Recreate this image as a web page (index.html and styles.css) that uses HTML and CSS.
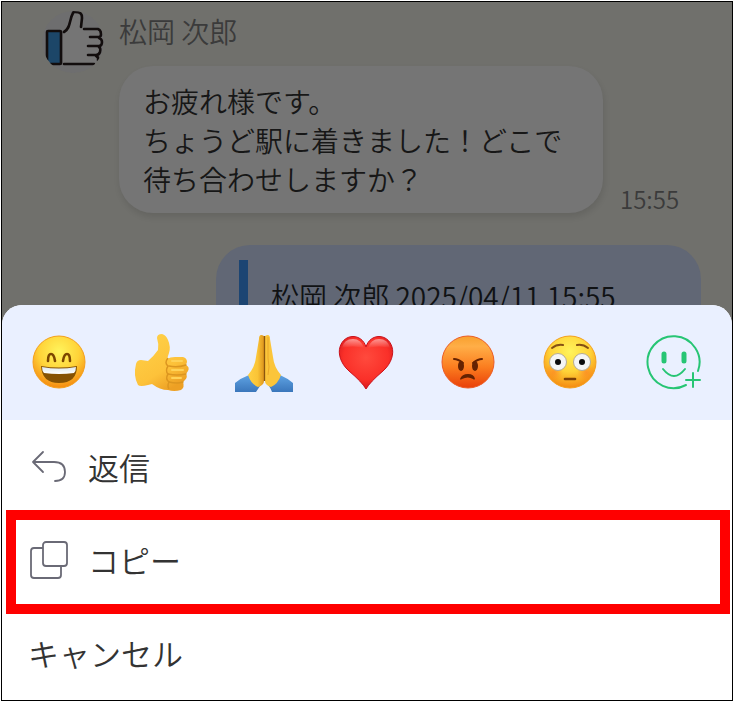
FILE: index.html
```html
<!DOCTYPE html>
<html lang="ja">
<head>
    <meta charset="UTF-8">
    <meta name="viewport" content="width=device-width, initial-scale=1.0">
    <title>トーク</title>
    <link rel="stylesheet" href="styles.css">
</head>
<body>
    <div class="screen">
        <main class="chat">
            <div class="message">
                <svg class="avatar" viewBox="0 0 62 62" aria-hidden="true">
                    <defs>
                        <clipPath id="avatar-clip"><circle cx="31" cy="31" r="31"/></clipPath>
                    </defs>
                    <g clip-path="url(#avatar-clip)">
                        <circle cx="31" cy="31" r="31" fill="#6e6e6f"/>
                        <path d="M21 21C28 17 28 7 31 1C35 0 39 1 40 4L39 17H57Q60 18 59 23Q62 28 59 33Q61 37 57 42Q57 48 52 52H21Z" fill="#757575"/>
                        <rect x="5" y="20" width="14" height="33" rx="1" fill="#1c4668" stroke="#120d0d" stroke-width="2.6"/>
                        <g fill="none" stroke="#120d0d" stroke-width="2.6" stroke-linecap="round" stroke-linejoin="round">
                            <path d="M22 21C29 17 27 9 31 2Q31 1 33 1C39 1 40 3 40 7L39 16"/>
                            <path d="M42 18H56Q59 19 59 23Q59 26 57 26H48M57 27Q60 28 60 31Q60 35 57 35H46M57 36Q59 37 58 41Q57 44 54 44H46M54 45Q57 46 56 49M52 53H22"/>
                        </g>
                    </g>
                </svg>
                <div class="message-body">
                    <div class="sender">松岡 次郎</div>
                    <div class="message-line">
                        <p class="bubble">お疲れ様です。<br>ちょうど駅に着きました！どこで<br>待ち合わせしますか？</p>
                        <time class="time">15:55</time>
                    </div>
                </div>
            </div>
            <div class="bubble-own">
                <blockquote class="quote">松岡 次郎 2025/04/11 15:55</blockquote>
            </div>
        </main>

        <section class="sheet">
            <div class="reactions">
                <button type="button" class="reaction" aria-label="笑顔">
                    <svg viewBox="0 0 60 60">
                        <defs>
                            <radialGradient id="face" cx=".5" cy=".3" r=".7">
                                <stop offset="0" stop-color="#fff45c"/>
                                <stop offset=".55" stop-color="#ffd338"/>
                                <stop offset="1" stop-color="#f58a10"/>
                            </radialGradient>
                            <linearGradient id="teeth" x1="0" y1="0" x2="0" y2="1">
                                <stop offset="0" stop-color="#dde8ed"/>
                                <stop offset="1" stop-color="#fff"/>
                            </linearGradient>
                        </defs>
                        <circle cx="29" cy="29" r="26" fill="url(#face)" stroke="#f4a01c"/>
                        <path d="M18 28Q18 21 21 21Q24 21 25 28M33 28Q34 21 37 21Q40 21 40 28" fill="none" stroke="#7c4700" stroke-width="2.6" stroke-linecap="round"/>
                        <path d="M11 33Q29 36 47 33Q47 50 29 50Q12 50 11 33Z" fill="#865203"/>
                        <path d="M12 34Q29 37 46 34Q46 38 44 40Q29 42 14 40Q12 38 12 34Z" fill="url(#teeth)"/>
                    </svg>
                </button>
                <button type="button" class="reaction" aria-label="いいね">
                    <svg viewBox="0 0 60 60">
                        <defs>
                            <linearGradient id="hand" x1="0" y1="0" x2=".6" y2="1">
                                <stop offset="0" stop-color="#ffd34a"/>
                                <stop offset=".7" stop-color="#fdc23a"/>
                                <stop offset="1" stop-color="#eda024"/>
                            </linearGradient>
                        </defs>
                        <path d="M4 31Q5 27 9 27L16 28Q21 24 26 17Q27 11 25 5Q25 1 30 1Q34 2 36 7Q39 14 37 20L35 26Q38 24 43 24H51Q55 25 55 29L54 32Q58 34 56 38L54 41Q56 44 53 47L51 49Q53 54 49 57Q42 59 36 57Q28 57 20 51L16 52Q8 54 6 52Q1 43 4 31Z" fill="url(#hand)"/>
                        <path d="M36 25Q32 30 36 33Q33 38 36 41Q33 46 37 49Q35 53 37 56" fill="none" stroke="#dc9620" stroke-width="1.5"/>
                        <path d="M37 33Q45 35 54 32M36 41Q45 43 54 41M37 49Q45 51 51 49" fill="none" stroke="#dc9620" stroke-width="1.5" stroke-linecap="round"/>
                        <path d="M40 28H50M40 37H51M40 45H49" stroke="#ffd258" stroke-width="2" stroke-linecap="round"/>
                    </svg>
                </button>
                <button type="button" class="reaction" aria-label="お願い">
                    <svg viewBox="0 0 60 60">
                        <defs>
                            <linearGradient id="sleeve" x1="0" y1="0" x2="0" y2="1">
                                <stop offset="0" stop-color="#5fa3e3"/>
                                <stop offset="1" stop-color="#3a76bb"/>
                            </linearGradient>
                            <linearGradient id="pray-left">
                                <stop offset="0" stop-color="#ffd044"/>
                                <stop offset=".6" stop-color="#fac436"/>
                                <stop offset="1" stop-color="#dd941c"/>
                            </linearGradient>
                        </defs>
                        <path d="M1 50Q7 45 15 42L26 53Q24 56 22 59H1ZM59 50Q53 45 46 42L35 53Q37 56 38 59H59Z" fill="url(#sleeve)"/>
                        <path d="M30 3Q25 0 25 6L22 24Q21 34 14 42Q17 51 24 54Q30 52 30 48Z" fill="url(#pray-left)"/>
                        <path d="M31 3Q36 0 36 6L39 24Q40 34 47 42Q44 51 37 54Q31 52 31 48Z" fill="#fbc53a"/>
                        <path d="M28 4L27 25M34 4L34 25Q36 34 34 42" fill="none" stroke="#eba828"/>
                        <path d="M30.5 3V48" stroke="#8a560e" stroke-width="1.3"/>
                    </svg>
                </button>
                <button type="button" class="reaction" aria-label="ハート">
                    <svg viewBox="0 0 60 60">
                        <defs>
                            <radialGradient id="heart" cx=".5" cy=".4" r=".7">
                                <stop offset="0" stop-color="#ff4a3d"/>
                                <stop offset=".6" stop-color="#fa3029"/>
                                <stop offset="1" stop-color="#c20d17"/>
                            </radialGradient>
                            <linearGradient id="heart-shine" x1="0" y1="0" x2="0" y2="1">
                                <stop offset="0" stop-color="#fff" stop-opacity=".5"/>
                                <stop offset="1" stop-color="#fff" stop-opacity="0"/>
                            </linearGradient>
                        </defs>
                        <path d="M30 56Q26 49 13 38C4 30 2 20 4 14C8 0 26 0 30 14C34 0 52 0 56 14C58 20 56 30 47 38Q34 49 30 56Z" fill="url(#heart)" stroke="#c9101a"/>
                        <path d="M6 15Q8 6 17 6Q25 6 28 15Q17 12 6 15ZM32 15Q35 6 43 6Q52 6 54 15Q43 12 32 15Z" fill="url(#heart-shine)"/>
                    </svg>
                </button>
                <button type="button" class="reaction" aria-label="怒り">
                    <svg viewBox="0 0 60 60">
                        <defs>
                            <linearGradient id="angry" x1="0" y1="0" x2="0" y2="1">
                                <stop offset="0" stop-color="#f8a02d"/>
                                <stop offset=".2" stop-color="#ffae47"/>
                                <stop offset=".6" stop-color="#fb7d1f"/>
                                <stop offset="1" stop-color="#e93f09"/>
                            </linearGradient>
                        </defs>
                        <circle cx="29" cy="29" r="26" fill="url(#angry)" stroke="#ec5c26"/>
                        <path d="M15 26Q19 26 24 30M43 26Q39 26 34 30" fill="none" stroke="#642202" stroke-width="2" stroke-linecap="round"/>
                        <ellipse cx="22" cy="33" rx="3" ry="5" fill="#642202"/>
                        <ellipse cx="36" cy="33" rx="3" ry="5" fill="#642202"/>
                        <path d="M21 46Q23 41 29 41Q35 41 36 46Q35 47 34 46Q29 43 23 46Q21 47 21 46Z" fill="#642202"/>
                    </svg>
                </button>
                <button type="button" class="reaction" aria-label="びっくり">
                    <svg viewBox="0 0 60 60">
                        <defs>
                            <radialGradient id="blush">
                                <stop offset="0" stop-color="#ff6a20" stop-opacity=".45"/>
                                <stop offset="1" stop-color="#ff6a20" stop-opacity="0"/>
                            </radialGradient>
                        </defs>
                        <circle cx="29" cy="29" r="26" fill="url(#face)" stroke="#f4a01c"/>
                        <circle cx="13" cy="39" r="9" fill="url(#blush)"/>
                        <circle cx="45" cy="39" r="9" fill="url(#blush)"/>
                        <circle cx="17" cy="29" r="8.5" fill="#f4f5f6" stroke="#b5ab94"/>
                        <circle cx="41" cy="29" r="8.5" fill="#f4f5f6" stroke="#b5ab94"/>
                        <circle cx="17" cy="29" r="3" fill="#0c0c0c"/>
                        <circle cx="41" cy="29" r="3" fill="#0c0c0c"/>
                        <path d="M11 15Q16 11 22 12M36 12Q42 11 47 15" fill="none" stroke="#855014" stroke-width="2" stroke-linecap="round"/>
                        <path d="M24 46H34" stroke="#7c3f06" stroke-width="2.6" stroke-linecap="round"/>
                    </svg>
                </button>
                <button type="button" class="reaction" aria-label="リアクションを追加">
                    <svg viewBox="0 0 60 60" fill="none" stroke="#27c574" stroke-width="2" stroke-linecap="round">
                        <path d="M55 38A26 26 0 1 0 43 52"/>
                        <path d="M21 21V28M41 21V28" stroke-width="5"/>
                        <path d="M20 36Q31 50 42 36M50 40V54M43 47H57"/>
                    </svg>
                </button>
            </div>

            <div class="menu">
                <button type="button" class="menu-item">
                    <svg class="menu-icon" viewBox="0 0 40 40" fill="none" stroke="#6a6a76" stroke-width="1.8" stroke-linecap="round" stroke-linejoin="round">
                        <path d="M15 5L5 15L15 25M5 15H26Q37 15 37 25Q37 34 27 34"/>
                    </svg>
                    返信
                </button>
                <button type="button" class="menu-item menu-item-marked">
                    <svg class="menu-icon" viewBox="0 0 40 40" fill="#fff" stroke="#6a6a76" stroke-width="1.8">
                        <rect x="3" y="8" width="30" height="30" rx="3"/>
                        <rect x="15" y="2" width="24" height="24" rx="3"/>
                    </svg>
                    コピー
                </button>
                <button type="button" class="menu-item">キャンセル</button>
            </div>
        </section>
    </div>
</body>
</html>
```
FILE: styles.css
```css
* {
    box-sizing: border-box;
}
body {
    margin: 0;
    padding: 1px 0 0 1px;
    background-color: white;
    font-family: "Noto Sans CJK JP", sans-serif;
    font-weight: 350;
    color: #333;
}
.screen {
    display: flex;
    flex-direction: column;
    min-height: calc(100vh - 1px);
    border: 1px solid black;
}
.chat {
    padding: 9px 31px 0 40px;
    background-color: #70706c;
}
.message {
    display: flex;
    align-items: flex-start;
    gap: 15px;
}
.avatar {
    width: 62px;
    height: 62px;
    flex-shrink: 0;
}
.message-body {
    flex: 1;
}
.sender {
    height: 55px;
    font-size: 28px;
    line-height: 40px;
    color: #3b3b3b;
}
.message-line {
    display: flex;
    align-items: flex-end;
    gap: 17px;
}
.bubble {
    flex: 0 1 484px;
    margin: 0;
    padding: 16px 24px 14px;
    border-radius: 34px;
    background-color: #757575;
    box-shadow: 1px 4px 6px rgba(0, 0, 0, 0.1);
    font-size: 28px;
    line-height: 39px;
    color: #171717;
}
.time {
    font-size: 24px;
    line-height: 28px;
    color: #3b3b3b;
}
.bubble-own {
    width: 485px;
    max-width: 100%;
    margin: 32px 0 0 auto;
    padding: 15px 23px 0;
    border-radius: 34px 34px 0 0;
    background-color: #616775;
}
.quote {
    margin: 0;
    padding: 16px 0 29px 23px;
    border-left: 9px solid #1c4573;
    font-size: 28px;
    line-height: 40px;
    color: #101214;
}
/* the sheet slides over the end of the chat */
.sheet {
    position: relative;
    flex: 1;
    margin-top: -40px;
    border-radius: 20px 20px 0 0;
    background-color: white;
    overflow: hidden;
}
button {
    border: none;
    padding: 0;
    background: none;
    color: inherit;
    font-family: inherit;
    font-weight: inherit;
    cursor: pointer;
}
.reactions {
    display: flex;
    justify-content: space-between;
    padding: 28px 29px 27px 28px;
    background-color: #eaf0ff;
}
.reaction {
    width: 60px;
    height: 60px;
}
.reaction svg {
    display: block;
    width: 100%;
}
.menu {
    display: flex;
    flex-direction: column;
}
.menu-item {
    display: flex;
    align-items: center;
    gap: 20px;
    min-height: 84px;
    padding: 0 26px 6px;
    font-size: 31px;
    line-height: 40px;
    text-align: left;
}
.menu-item:first-child {
    min-height: 90px;
    padding: 4px 26px 0;
}
.menu-item-marked {
    margin: 0 2px 0 4px;
    min-height: 104px;
    padding: 0 12px 4px;
    border: 10px solid red;
}
.menu-icon {
    width: 40px;
    height: 40px;
    flex-shrink: 0;
}
```
